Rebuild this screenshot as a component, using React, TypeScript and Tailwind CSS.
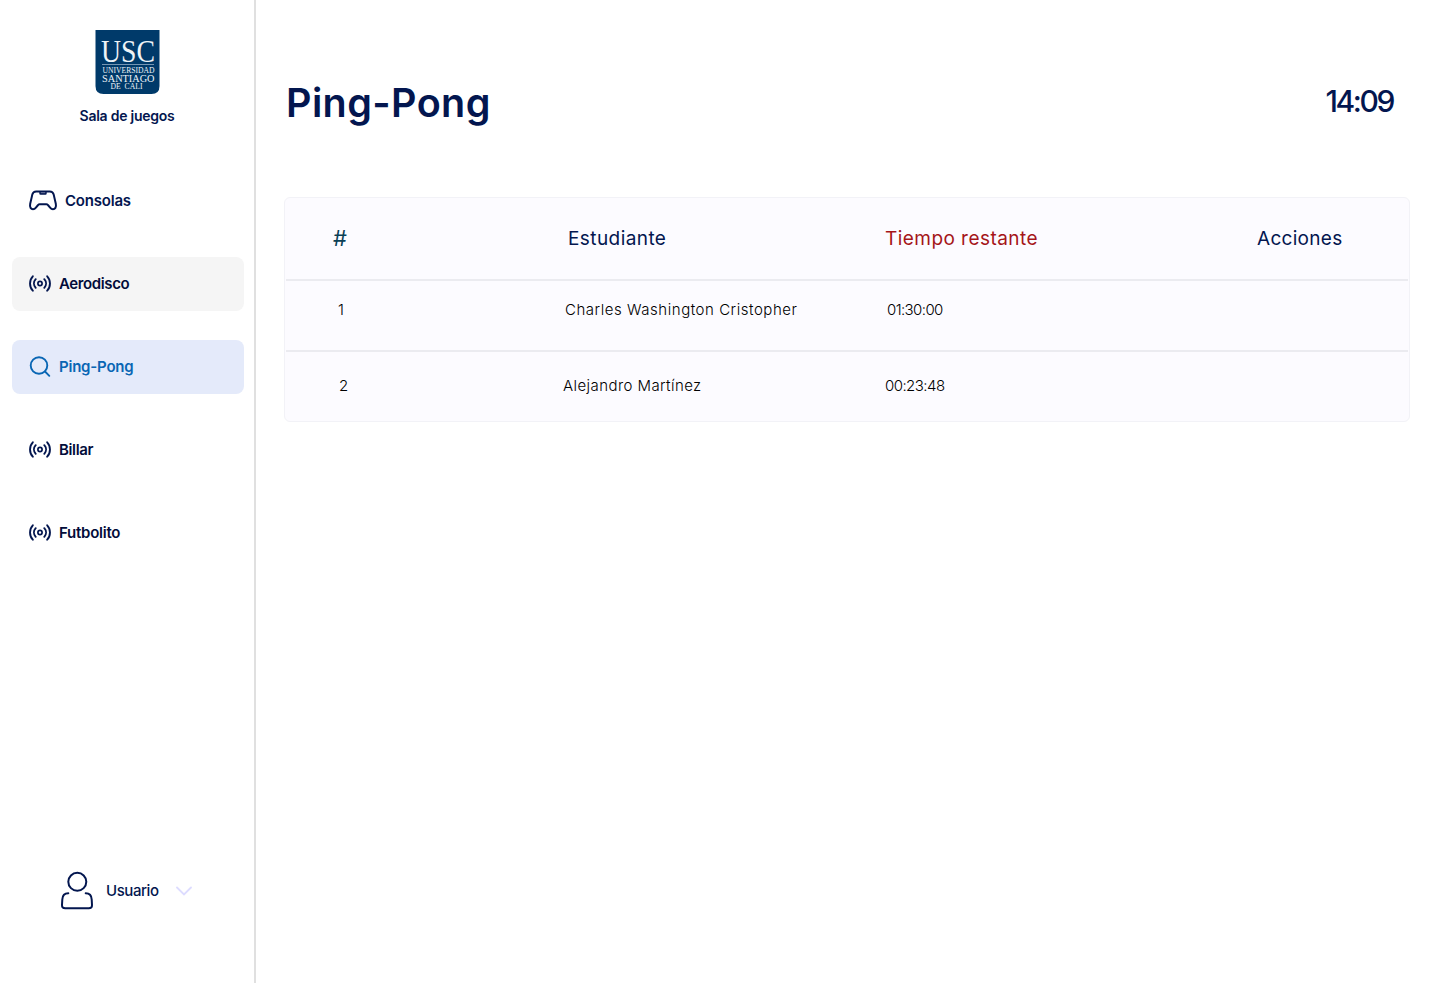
const NAVY = "#03164f";

function GamepadIcon() {
  return (
    <svg width="28" height="20" viewBox="0 0.5 28 20" fill="none" stroke={NAVY} strokeWidth="2" strokeLinejoin="round" strokeLinecap="round" className="overflow-visible">
      <path d="M7.2 1H20.8C22.8 1 24.200 2.200 24.700 4.100L26.800 13.200C27.600 17 25.900 18.700 24 18.700C22.800 18.700 21.900 18.100 21.100 17.100L18.900 14.500C18.500 14 18 13.700 17.300 13.700H10.700C10 13.700 9.500 14 9.100 14.500L6.900 17.100C6.100 18.100 5.200 18.700 4 18.700C2.100 18.700 .4 17 1.200 13.200L3.300 4.100C3.800 2.200 5.200 1 7.200 1Z" />
      <path d="M11 1.500V2.900C11 3.300 11.200 3.500 11.600 3.500H16.400C16.800 3.500 17 3.300 17 2.900V1.500" fill="#5a658e" strokeWidth="1.400" />
    </svg>
  );
}

function SignalIcon() {
  return (
    <svg width="22" height="18" viewBox="0 0 22 18" fill="none" stroke={NAVY} strokeWidth="1.900" strokeLinecap="round">
      <circle cx="11" cy="8.500" r="2.100" strokeWidth="1.700" />
      <path d="M3.800 1.300C.1 5.200 .1 11.800 3.800 15.700M18.200 1.300C21.900 5.200 21.900 11.800 18.200 15.700M6.700 4.200C4.400 6.700 4.400 10.300 6.700 12.800M15.300 4.200C17.600 6.700 17.600 10.300 15.300 12.800" />
    </svg>
  );
}

function SearchIcon() {
  return (
    <svg width="22" height="22" viewBox="0 0.5 22 22" fill="none" stroke="#0966b4" strokeWidth="1.900" strokeLinecap="round">
      <circle cx="10" cy="10" r="8.300" />
      <path d="M16 16L20.300 20.300" />
    </svg>
  );
}

function Logo() {
  return (
    <svg width="65" height="65" viewBox="0 0 65 65" className="overflow-visible font-['Liberation_Serif',serif]" fill="#eef3f7">
      <path d="M.5 0H64.500V56Q64.500 64 56.500 64H8.500Q.5 64 .5 56Z" fill="#003a6a" />
      <text x="6" y="31.500" fontSize="31.500" textLength="54" lengthAdjust="spacingAndGlyphs">USC</text>
      <path d="M7 34.500H59" stroke="#a9bfd2" strokeWidth=".7" />
      <text x="7.500" y="43" fontSize="8" textLength="52" lengthAdjust="spacingAndGlyphs">UNIVERSIDAD</text>
      <text x="7" y="52" fontSize="10.500" textLength="52.500" lengthAdjust="spacingAndGlyphs">SANTIAGO</text>
      <text x="15.500" y="59.300" fontSize="7.500" textLength="32" lengthAdjust="spacingAndGlyphs">DE&#160;&#160;CALI</text>
    </svg>
  );
}

const items = [
  { label: "Consolas", icon: <GamepadIcon />, style: "text-[#03164f] tracking-[-0.2px]" },
  { label: "Aerodisco", icon: <SignalIcon />, style: "text-[#020c3a] bg-[#f5f5f5] tracking-[-0.38px]" },
  { label: "Ping-Pong", icon: <SearchIcon />, style: "text-[#0966b4] bg-[#e4eafa] tracking-[-0.22px]" },
  { label: "Billar", icon: <SignalIcon />, style: "text-[#020c3a] tracking-[-0.35px]" },
  { label: "Futbolito", icon: <SignalIcon />, style: "text-[#020c3a] tracking-[-0.25px]" },
];

export default function App() {
  return (
    <div className="flex h-[983px] w-[1440px] overflow-hidden bg-white font-['Inter',sans-serif] text-[#03164f]">
      <aside className="flex w-64 shrink-0 flex-col border-r-2 border-[#e0e0e0]">
        <div className="flex flex-col items-center pt-[30px]">
          <Logo />
          <div className="mt-[11px] text-[14px] font-semibold leading-5 tracking-[-0.25px]">Sala de juegos</div>
        </div>
        <nav className="mt-[47.5px] flex flex-col gap-[29px] pl-3">
          {items.map((item) => (
            <a key={item.label} className={`flex h-[54px] w-[232px] items-center gap-2 rounded-lg pl-[17px] text-[15px] font-semibold ${item.style}`}>
              {item.icon}
              <span className="pt-[2px]">{item.label}</span>
            </a>
          ))}
        </nav>
        <div className="mt-auto mb-[72px] flex items-center pl-[60px]">
          <svg width="34" height="40" viewBox="0 0 34 40" fill="none" stroke={NAVY} strokeWidth="2" strokeLinecap="round">
            <circle cx="17.300" cy="10.800" r="9" />
            <path d="M8.300 22.300C4.400 22.300 2.500 24.500 2.300 28.500L2 34C1.900 36.300 3 37.300 5.200 37.300H28.800C31 37.300 32.100 36.300 32 34L31.700 28.500C31.500 24.500 29.600 22.300 25.700 22.300" />
          </svg>
          <span className="ml-3 text-[15px] font-medium tracking-[-0.42px]">Usuario</span>
          <svg className="ml-[17px]" width="16" height="10" viewBox="0 0 16 10" fill="none" stroke="#dddcff" strokeWidth="1.800" strokeLinecap="round">
            <path d="M1 1.500L8 8.500L15 1.500" />
          </svg>
        </div>
      </aside>
      <main className="flex-1 pl-7 pr-[30px]">
        <header className="flex h-[197px] items-start justify-between pl-[2px] pr-[17px] pt-[76px]">
          <h1 className="text-[39.5px] font-semibold leading-[54px] tracking-[0.4px]">Ping-Pong</h1>
          <time className="text-[30px] font-medium leading-[51px] tracking-[-2.4px]">14:09</time>
        </header>
        <section className="h-[225px] rounded-md border border-[#f2f2f7] bg-[#fcfbff] px-px">
          <div className="grid h-[83px] grid-cols-[277px_322px_372px_1fr] items-center border-b-2 border-[#ebebf0] pt-[2px] text-[19px]">
            <span className="pb-[3px] pl-[47px] text-[22px] leading-6 text-[#0b4056]">#</span>
            <span className="pl-[5px] tracking-[0.42px]">Estudiante</span>
            <span className="tracking-[0.45px] text-[#a51519]">Tiempo restante</span>
            <span className="tracking-[0.3px]">Acciones</span>
          </div>
          <div className="grid h-[71px] grid-cols-[277px_322px_372px_1fr] items-center border-b-2 border-[#ebebf0] pb-[10px] text-[15px] font-light text-black">
            <span className="pl-[52px]">1</span>
            <span className="pl-[2px] tracking-[0.54px]">Charles Washington Cristopher</span>
            <span className="pl-[2px] tracking-[-0.6px]">01:30:00</span>
          </div>
          <div className="grid h-[70px] grid-cols-[277px_322px_372px_1fr] items-center pb-[2px] text-[15px] font-light text-black">
            <span className="pl-[53px]">2</span>
            <span className="tracking-[0.43px]">Alejandro Martínez</span>
            <span className="tracking-[-0.55px]">00:23:48</span>
          </div>
        </section>
      </main>
    </div>
  );
}
